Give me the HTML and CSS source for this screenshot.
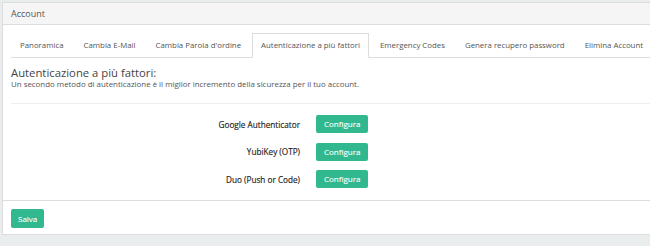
FILE: index.html
```html
<!DOCTYPE html>
<html lang="it">
<head>
<meta charset="utf-8">
<title>Account</title>
<link rel="stylesheet" href="styles.css">
</head>
<body>
<div class="panel">
  <div class="panel-heading">Account</div>
  <div class="panel-body">
    <ul class="tabs">
      <li class="tab">Panoramica</li>
      <li class="tab">Cambia E-Mail</li>
      <li class="tab">Cambia Parola d'ordine</li>
      <li class="tab active">Autenticazione a più fattori</li>
      <li class="tab">Emergency Codes</li>
      <li class="tab">Genera recupero password</li>
      <li class="tab">Elimina Account</li>
    </ul>
    <h3 class="title">Autenticazione a più fattori:</h3>
    <p class="subtitle">Un secondo metodo di autenticazione è il miglior incremento della sicurezza per il tuo account.</p>
    <hr class="sep">
    <div class="form">
      <div class="row">
        <span class="label">Google Authenticator</span>
        <span class="btn">Configura</span>
      </div>
      <div class="row">
        <span class="label">YubiKey (OTP)</span>
        <span class="btn">Configura</span>
      </div>
      <div class="row">
        <span class="label">Duo (Push or Code)</span>
        <span class="btn">Configura</span>
      </div>
    </div>
  </div>
  <div class="panel-footer">
    <span class="btn btn-save">Salva</span>
  </div>
</div>
</body>
</html>
```
FILE: styles.css
```css
html, body {
  margin: 0;
  padding: 0;
}
body {
  background: #eaeded;
  font-family: "Open Sans", "Noto Sans", sans-serif;
  color: #333;
  height: 246px;
  overflow: hidden;
}
.panel {
  margin: 2px 0 0 2px;
  width: 670px;
  background: #fff;
  border: 1px solid #dddddd;
}
.panel-heading {
  height: 21px;
  line-height: 21px;
  background: #f5f5f5;
  border-bottom: 1px solid #dddddd;
  padding: 0 8px;
  font-size: 9px;
  color: #555;
}
.panel-body {
  padding: 8px 8px 12px 8px;
}
.tabs {
  list-style: none;
  margin: 0;
  padding: 0;
  display: flex;
  height: 24px;
  border-bottom: 1px solid #dddddd;
}
.tab {
  padding: 0 8px;
  margin-right: 2px;
  line-height: 23px;
  border: 1px solid transparent;
  font-size: 7.85px;
  color: #555;
  white-space: nowrap;
  height: 23px;
}
.tab.active {
  border-color: #dddddd;
  border-bottom-color: #fff;
  background: #fff;
  color: #555;
}
.title {
  margin: 9px 0 0 0;
  font-size: 11.3px;
  line-height: 12px;
  font-weight: 400;
  color: #444;
}
.subtitle {
  margin: 1px 0 0 0;
  font-size: 7.9px;
  line-height: 9px;
  color: #555;
}
.sep {
  margin: 14px 0 0 0;
  border: 0;
  border-top: 1px solid #eeeeee;
  height: 0;
}
.form {
  margin-top: 11px;
  display: flex;
  flex-direction: column;
  gap: 9.5px;
}
.row {
  display: grid;
  grid-template-columns: 289px auto;
  column-gap: 16px;
  align-items: center;
}
.label {
  text-align: right;
  font-size: 8.2px;
  font-weight: 400;
  color: #222;
  -webkit-text-stroke: 0.15px #222;
}
.btn {
  display: inline-block;
  justify-self: start;
  background: #31b88e;
  color: #fff;
  font-size: 8px;
  line-height: 18px;
  height: 18px;
  padding: 0 8px;
  border-radius: 2px;
  -webkit-text-stroke: 0.1px #fff;
}
.panel-footer {
  border-top: 1px solid #dddddd;
  padding: 8px 8px 6px 8px;
  display: flex;
}
.btn-save {
  height: 19px;
  line-height: 19px;
  padding: 0 7px;
  width: 19px;
  text-align: center;
}
```
